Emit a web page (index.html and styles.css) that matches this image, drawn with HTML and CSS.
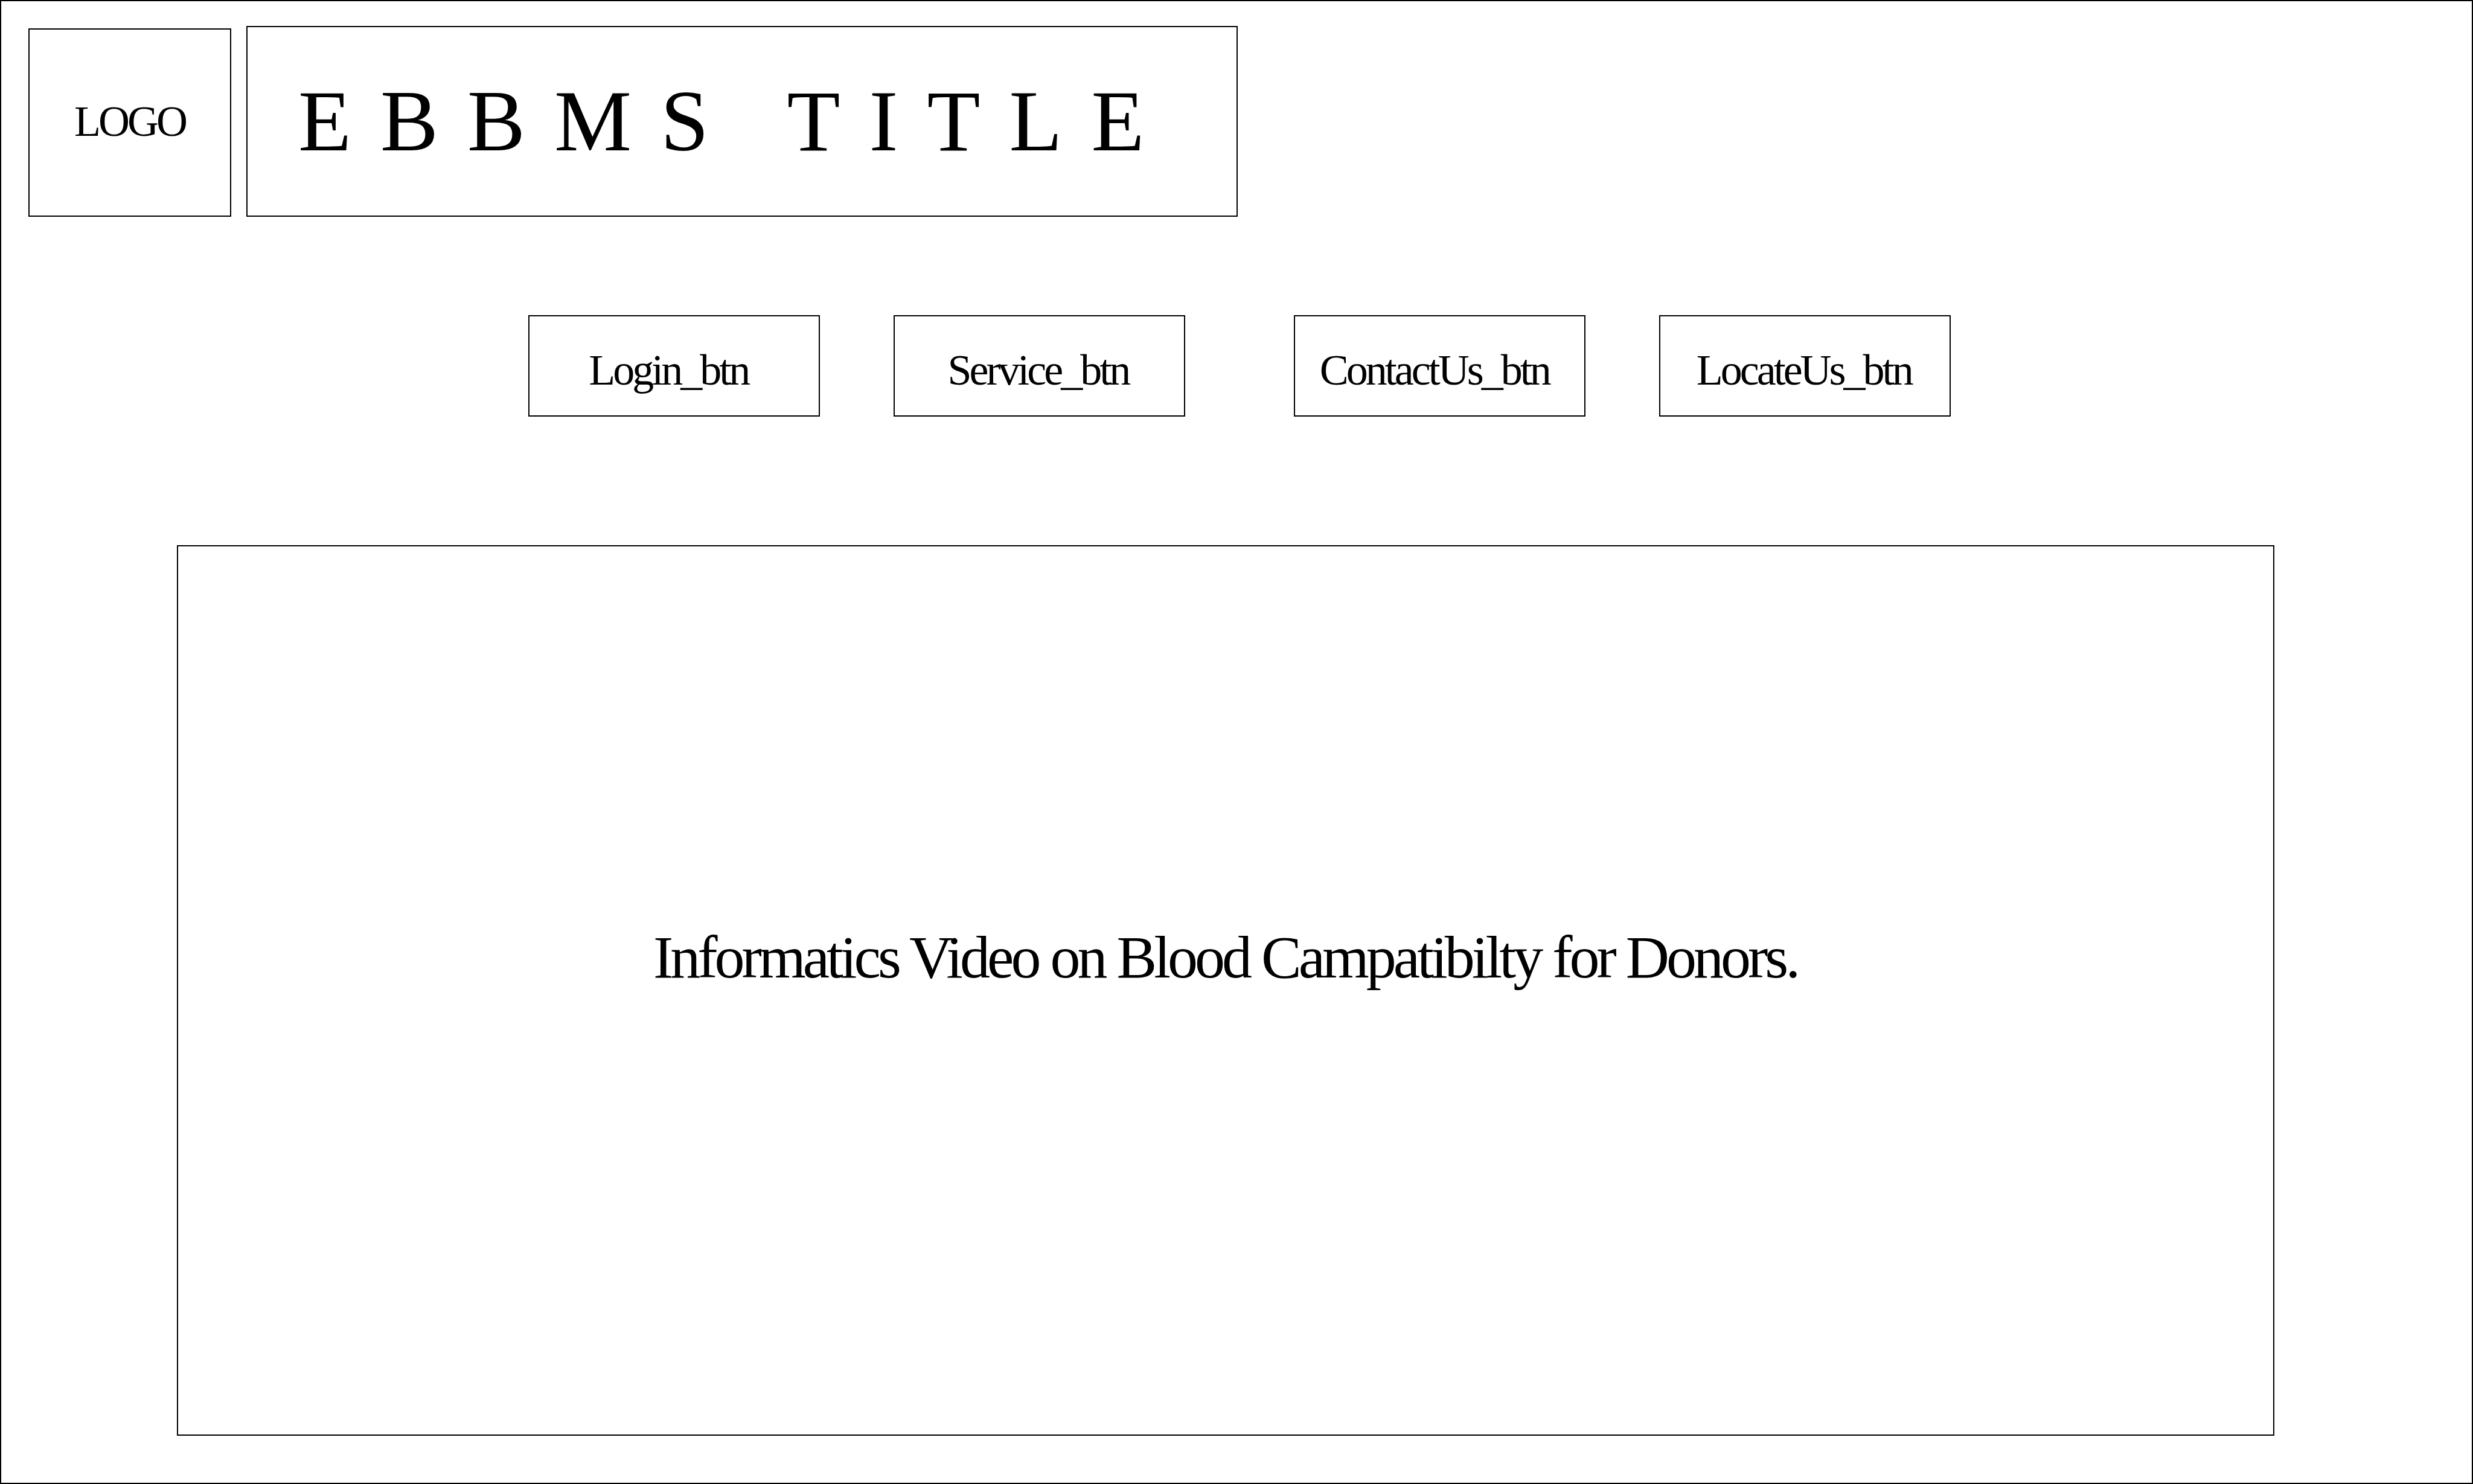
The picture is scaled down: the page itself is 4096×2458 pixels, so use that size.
FILE: index.html
```html
<!DOCTYPE html>
<html lang="en">
<head>
<meta charset="utf-8">
<title>EBBMS</title>
<link rel="stylesheet" href="styles.css">
</head>
<body>
<div class="page">
  <header class="header">
    <div class="box logo">LOGO</div>
    <h1 class="box title">EBBMS TITLE</h1>
  </header>
  <nav class="nav">
    <div class="nav-pair">
      <button class="box nav-button" type="button">Login_btn</button>
      <button class="box nav-button" type="button">Service_btn</button>
    </div>
    <div class="nav-pair">
      <button class="box nav-button" type="button">ContactUs_btn</button>
      <button class="box nav-button" type="button">LocateUs_btn</button>
    </div>
  </nav>
  <main class="box video">
    <p class="video-caption">Informatics Video on Blood Campatibilty for Donors.</p>
  </main>
</div>
</body>
</html>
```

FILE: styles.css
```css
* {
  box-sizing: border-box;
}

body {
  margin: 0;
  background: #fff;
  color: #000;
  font-family: "Liberation Serif", "Times New Roman", serif;
  font-size: 72px;
  line-height: 84px;
  letter-spacing: -4px;
}

.page {
  display: flex;
  flex-direction: column;
  min-height: 100vh;
  padding: 41px 0 78px;
  border: 2px solid #000;
}

.box {
  display: flex;
  align-items: center;
  border: 2px solid #000;
  background: #fff;
}

.header {
  display: flex;
  align-items: flex-end;
  gap: 25px;
  padding: 0 45px;
}

.logo {
  flex: 0 0 336px;
  justify-content: center;
  min-height: 312px;
  padding-bottom: 4px;
}

.title {
  flex: 0 1 1642px;
  min-height: 316px;
  margin: 0;
  padding-left: 84px;
  font-size: 144px;
  font-weight: 400;
  line-height: 168px;
  letter-spacing: 48px;
}

.nav {
  display: flex;
  gap: 5.6%;
  margin-top: 163px;
  padding-left: 21.33%;
}

.nav-pair {
  display: flex;
  flex: 0 0 33.8%;
  justify-content: space-between;
}

.nav-button {
  flex: 0 0 44.4%;
  justify-content: center;
  min-height: 168px;
  padding: 14px 4px 0 0;
  color: inherit;
  font: inherit;
  letter-spacing: inherit;
  cursor: pointer;
}

.nav-pair .nav-button:first-child {
  padding-right: 18px;
}

.video {
  flex: 1;
  justify-content: center;
  margin: 213px 8% 0 7.1%;
  padding-bottom: 110px;
}

.video-caption {
  margin: 0;
  font-size: 100px;
  line-height: 116px;
  letter-spacing: -5px;
}
```
